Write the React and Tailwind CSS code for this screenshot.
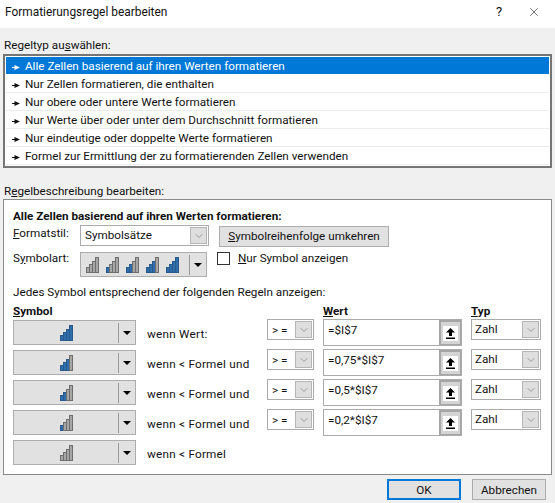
import { ChevronDown, X } from 'lucide-react';

const ruleTypes = [
  'Alle Zellen basierend auf ihren Werten formatieren',
  'Nur Zellen formatieren, die enthalten',
  'Nur obere oder untere Werte formatieren',
  'Nur Werte über oder unter dem Durchschnitt formatieren',
  'Nur eindeutige oder doppelte Werte formatieren',
  'Formel zur Ermittlung der zu formatierenden Zellen verwenden',
];

const rules = [
  { level: 4, label: 'wenn Wert:', value: '=$I$7' },
  { level: 3, label: 'wenn < Formel und', value: '=0,75*$I$7' },
  { level: 2, label: 'wenn < Formel und', value: '=0,5*$I$7' },
  { level: 1, label: 'wenn < Formel und', value: '=0,2*$I$7' },
  { level: 0, label: 'wenn < Formel' },
];

// signal bars, "level" of the four are blue
function Bars({ level }) {
  const bars = [
    { x: 0.5, y: 10.5, h: 5 },
    { x: 3.5, y: 7.5, h: 8 },
    { x: 6.5, y: 4.5, h: 11 },
    { x: 9.5, y: 0.5, h: 15 },
  ];
  return (
    <svg width="13" height="16" viewBox="0 0 13 16" className="block shrink-0">
      {bars.map((b, i) => (
        <rect
          key={i}
          x={b.x}
          y={b.y}
          width="3"
          height={b.h}
          fill={i < level ? '#2f6ead' : '#a6a6a6'}
          stroke={i < level ? '#2a5a8c' : '#6e6e6e'}
          strokeWidth="1"
        />
      ))}
    </svg>
  );
}

function Caret() {
  return (
    <svg width="8" height="4" viewBox="0 0 8 4" className="block">
      <path d="M0 0H8L4 4Z" fill="#000" />
    </svg>
  );
}

function Bullet({ light }) {
  return (
    <svg width="8" height="5" viewBox="0 0 8 5" className="block shrink-0">
      <path d="M0 2H2.5V0L8 2.5L2.5 5V3H0Z" fill={light ? '#fff' : '#111'} />
    </svg>
  );
}

function Select({ text, className, textClass = '' }) {
  return (
    <div className={`flex items-start bg-white border border-[#ababab] ${className}`}>
      <span className={`flex-1 leading-[17px] ${textClass}`}>{text}</span>
      <span className="w-[17px] h-[17px] mt-px mr-px bg-[#dedede] border border-[#b5b5b5] flex items-center justify-center">
        <ChevronDown size={12} strokeWidth={1} color="#555" />
      </span>
    </div>
  );
}

function SymbolPicker({ level }) {
  return (
    <div className="w-[123px] h-[25px] shrink-0 bg-[#e1e1e1] border border-[#adadad] flex items-center">
      <div className="flex-1 flex justify-center">
        <Bars level={level} />
      </div>
      <div className="w-[17px] h-[20px] border-l border-[#9a9a9a] flex items-center justify-center">
        <Caret />
      </div>
    </div>
  );
}

export default function App() {
  return (
    <div
      className="w-[555px] h-[503px] overflow-hidden bg-[#f0f0f0] text-[11.7px] text-[#111]"
      style={{ fontFamily: 'Roboto, sans-serif' }}
    >
      {/* Title bar */}
      <div className="h-[28px] bg-white flex items-center pl-[5px]">
        <span className="flex-1 text-[11.9px] leading-none -mt-[2px]">Formatierungsregel bearbeiten</span>
        <span className="w-[12px] text-center text-[13px] leading-none -mt-[5px] mr-[22px]">?</span>
        <X size={14} strokeWidth={1} color="#111" className="mr-[14px] -mt-[4px]" />
      </div>

      {/* Rule type */}
      <div className="pt-[8px] pl-[4px] h-[26px] leading-[18px]">
        Regeltyp au<u>s</u>wählen:
      </div>
      <div className="mx-[3px] h-[114px] bg-white border-2 border-[#757575] p-px">
        {ruleTypes.map((t, i) => (
          <div
            key={t}
            className={`h-[18px] flex items-center gap-[5px] pl-[6px] pt-[3px] border-b ${
              i === 0 ? 'bg-[#0078d7] text-white border-white' : 'border-[#ececec]'
            }`}
          >
            <Bullet light={i === 0} />
            <span className="leading-none">{t}</span>
          </div>
        ))}
      </div>

      {/* Rule description */}
      <div className="pt-[14px] pl-[4px] h-[31px] leading-[18px]">
        R<u>e</u>gelbeschreibung bearbeiten:
      </div>
      <div className="mx-[3px] h-[276px] bg-white border border-[#8a8a8a] pl-[9px] pt-[8px]">
        <div className="font-bold leading-[16px] h-[17px]">Alle Zellen basierend auf ihren Werten formatieren:</div>
        <div className="flex items-start h-[27px]">
          <span className="w-[67px] leading-[16px]">
            <u>F</u>ormatstil:
          </span>
          <Select text="Symbolsätze" className="w-[129px] h-[21px] pl-[4px]" textClass="pt-[1px]" />
          <button className="ml-[10px] mt-px w-[170px] h-[21px] bg-[#e1e1e1] border border-[#adadad] leading-[17px] text-center">
            <u>S</u>ymbolreihenfolge umkehren
          </button>
        </div>
        <div className="flex items-start h-[32px]">
          <span className="w-[67px] leading-[12px]">
            S<u>y</u>mbolart:
          </span>
          <div className="w-[127px] h-[25px] bg-[#e1e1e1] border border-[#adadad] flex items-center pl-[5px]">
            <div className="flex gap-[7px]">
              {[0, 1, 2, 3, 4].map((n) => (
                <Bars key={n} level={n} />
              ))}
            </div>
            <div className="ml-[10px] w-[18px] h-[20px] border-l border-[#9a9a9a] flex items-center justify-center">
              <Caret />
            </div>
          </div>
          <div className="ml-[10px] w-[13px] h-[13px] bg-white border border-[#333]" />
          <span className="ml-[8px] leading-[12px]">
            <u>N</u>ur Symbol anzeigen
          </span>
        </div>
        <div className="leading-[16px] h-[20px]">Jedes Symbol entsprechend der folgenden Regeln anzeigen:</div>

        {/* Column heads */}
        <div className="flex h-[14px] font-bold leading-[14px]">
          <span className="w-[310px]">
            <u>S</u>ymbol
          </span>
          <span className="w-[148px]">
            <u>W</u>ert
          </span>
          <span>
            <u>T</u>yp
          </span>
        </div>

        <div className="flex flex-col gap-[5px] mt-[2px]">
          {rules.map((r) => (
            <div key={r.label + r.level} className="flex items-start h-[25px]">
              <SymbolPicker level={r.level} />
              <span className="ml-[11px] w-[120px] pt-[6px] leading-[16px] tracking-[0.25px]">{r.label}</span>
              {r.value && (
                <>
                  <Select text="> =" className="w-[47px] h-[21px] -mt-px pl-[4px]" textClass="pt-[2px]" />
                  <div className="ml-[9px] w-[139px] h-[27px] -mt-px bg-white border border-[#ababab] flex">
                    <span className="flex-1 pl-[4px] pt-[2px] leading-[17px]">{r.value}</span>
                    <span className="w-[22px] bg-[#d4d4d4] border-2 border-r-1 border-b-1 border-[#a6a6a6] flex items-center justify-center">
                      <span className="w-[15px] h-[15px] bg-white flex items-center justify-center">
                        <svg width="9" height="11" viewBox="0 0 9 11">
                          <path d="M4.5 0L9 4.5H6V8H3V4.5H0Z M0 9.5H9V11H0Z" fill="#000" />
                        </svg>
                      </span>
                    </span>
                  </div>
                  <Select text="Zahl" className="ml-[9px] w-[70px] h-[21px] -mt-px pl-[3px]" textClass="pt-[1px]" />
                </>
              )}
            </div>
          ))}
        </div>
      </div>

      {/* Footer */}
      <div className="flex justify-end gap-[11px] pr-[9px] pt-[4px]">
        <button className="w-[74px] h-[21px] bg-[#e1e1e1] border-2 border-[#0078d7] leading-[16px] text-center">OK</button>
        <button className="w-[74px] h-[21px] bg-[#e1e1e1] border border-[#adadad] leading-[18px] text-center">Abbrechen</button>
      </div>
    </div>
  );
}
